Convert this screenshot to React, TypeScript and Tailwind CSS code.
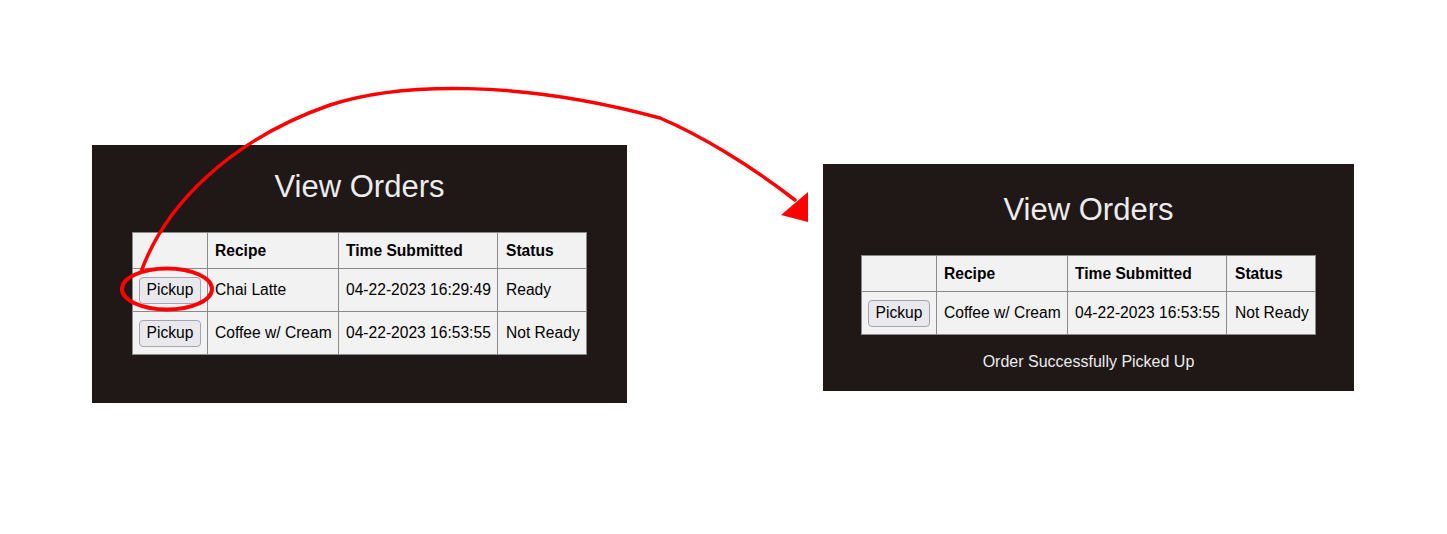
import React from "react";

type Row = { recipe: string; time: string; status: string };

function OrdersTable({ rows }: { rows: Row[] }) {
  return (
    <table className="w-[454px] table-fixed border-collapse border border-[#8a8a8a] text-[15.6px] text-black">
      <colgroup>
        <col className="w-[75px]" />
        <col className="w-[131px]" />
        <col className="w-[159px]" />
        <col className="w-[89px]" />
      </colgroup>
      <thead>
        <tr className="h-[36px] bg-[#f2f2f2]">
          <th className="border border-[#8a8a8a] p-0"></th>
          <th className="whitespace-nowrap border border-[#8a8a8a] pl-[7px] pr-0 text-left font-bold">Recipe</th>
          <th className="whitespace-nowrap border border-[#8a8a8a] pl-[7px] pr-0 text-left font-bold">Time Submitted</th>
          <th className="whitespace-nowrap border border-[#8a8a8a] pl-[8px] pr-0 text-left font-bold">Status</th>
        </tr>
      </thead>
      <tbody>
        {rows.map((r) => (
          <tr key={r.recipe} className="h-[43px] bg-[#f2f2f2]">
            <td className="border border-[#8a8a8a] px-0 text-center">
              <button className="h-[27px] w-[62px] rounded-[4px] border border-[#a4a4ae] bg-[#e9e9ed] text-[15.6px] leading-none text-black">
                Pickup
              </button>
            </td>
            <td className="whitespace-nowrap border border-[#8a8a8a] pl-[7px] pr-0">{r.recipe}</td>
            <td className="whitespace-nowrap border border-[#8a8a8a] pl-[7px] pr-0">{r.time}</td>
            <td className="whitespace-nowrap border border-[#8a8a8a] pl-[8px] pr-0">{r.status}</td>
          </tr>
        ))}
      </tbody>
    </table>
  );
}

export default function App() {
  return (
    <div
      className="relative h-[534px] w-[1447px] overflow-hidden bg-white"
      style={{ fontFamily: '"Liberation Sans", Arial, sans-serif' }}
    >
      <div className="flex items-start pl-[92px]">
        <div className="mt-[145px] flex h-[258px] w-[535px] flex-col items-center bg-[#1f1817] pt-[24px]">
          <h1 className="text-[31px] font-normal leading-[36px] text-[#ececec]">View Orders</h1>
          <div className="mt-[27px]">
            <OrdersTable
              rows={[
                { recipe: "Chai Latte", time: "04-22-2023 16:29:49", status: "Ready" },
                { recipe: "Coffee w/ Cream", time: "04-22-2023 16:53:55", status: "Not Ready" },
              ]}
            />
          </div>
        </div>
        <div className="ml-[196px] mt-[164px] flex h-[227px] w-[531px] flex-col items-center bg-[#1f1817] pt-[28px]">
          <h1 className="text-[31px] font-normal leading-[36px] text-[#ececec]">View Orders</h1>
          <div className="mt-[27px]">
            <OrdersTable
              rows={[{ recipe: "Coffee w/ Cream", time: "04-22-2023 16:53:55", status: "Not Ready" }]}
            />
          </div>
          <p className="mt-[18px] text-[16px] leading-[18px] text-[#ececec]">Order Successfully Picked Up</p>
        </div>
      </div>

      <svg
        className="pointer-events-none absolute left-0 top-0"
        width="1447"
        height="534"
        viewBox="0 0 1447 534"
      >
        <ellipse cx="167" cy="289" rx="45" ry="20.5" fill="none" stroke="#ff0000" strokeWidth="4" />
        <path
          d="M 141 272 C 165 205, 230 140, 330 105 C 400 82, 520 80, 660 118 C 700 135, 750 165, 795 200"
          fill="none"
          stroke="#ff0000"
          strokeWidth="3.5"
          strokeLinecap="round"
        />
        <polygon points="808,192 808,222 781,215" fill="#ff0000" />
      </svg>
    </div>
  );
}
